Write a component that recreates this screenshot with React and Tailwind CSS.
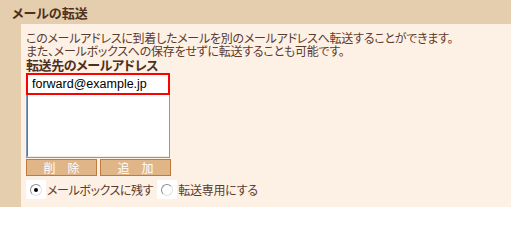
import React from "react";

function Radio({ checked }) {
  return (
    <span className="flex items-center justify-center w-[20px] h-[19px] bg-white">
      <span className="relative w-[12px] h-[12px] rounded-full border border-[#8c8c8c] border-r-[#e0e0e0] border-b-[#e0e0e0] bg-white flex items-center justify-center">
        {checked && <span className="w-[4px] h-[4px] rounded-full bg-black" />}
      </span>
    </span>
  );
}

export default function App() {
  return (
    <div className="w-[511px] h-[207px] bg-[#e5cead] text-[#5c3a2e] text-[12px] leading-[13px] tracking-[-0.25px] font-['Noto_Sans_CJK_JP',sans-serif] [font-feature-settings:'palt'] overflow-hidden">
      <div className="h-[24px] pl-[12px] pt-[6px] font-bold text-[13px] tracking-normal text-[#4e3020]">メールの転送</div>
      <div className="ml-[21px] h-[183px] bg-[#fdf1e5] pl-[5px] pt-[7px]">
        <div className="h-[13px]">このメールアドレスに到着したメールを別のメールアドレスへ転送することができます。</div>
        <div className="h-[13px]">また、メールボックスへの保存をせずに転送することも可能です。</div>
        <div className="font-bold text-[#4e3020] text-[13px] leading-[15px] tracking-[-0.4px]">転送先のメールアドレス</div>
        <div className="mt-[1px] w-[144px] h-[85px] bg-white flex flex-col border-x border-b border-[#7f9db9]">
          <div className="-mx-[1px] h-[22px] border-2 border-[#ff0000] flex items-center pl-[4px] font-['Liberation_Sans',sans-serif] text-[12.5px] tracking-normal text-black">
            forward@example.jp
          </div>
          <div className="flex-1 border-l border-[#7a7262] border-b border-b-[#f1efe2]" />
        </div>
        <div className="mt-[1px] flex gap-[3px]">
          <button className="w-[71px] h-[17px] bg-[#e0b688] border border-[#c07a3b] text-white text-[12px] leading-[15px] tracking-normal">削　除</button>
          <button className="w-[71px] h-[17px] bg-[#e0b688] border border-[#c07a3b] text-white text-[12px] leading-[15px] tracking-normal">追　加</button>
        </div>
        <div className="mt-[4px] flex items-center">
          <Radio checked />
          <span className="ml-[1px] tracking-[-0.4px]">メールボックスに残す</span>
          <span className="ml-[4px]"><Radio /></span>
          <span className="ml-[1px]">転送専用にする</span>
        </div>
      </div>
    </div>
  );
}
